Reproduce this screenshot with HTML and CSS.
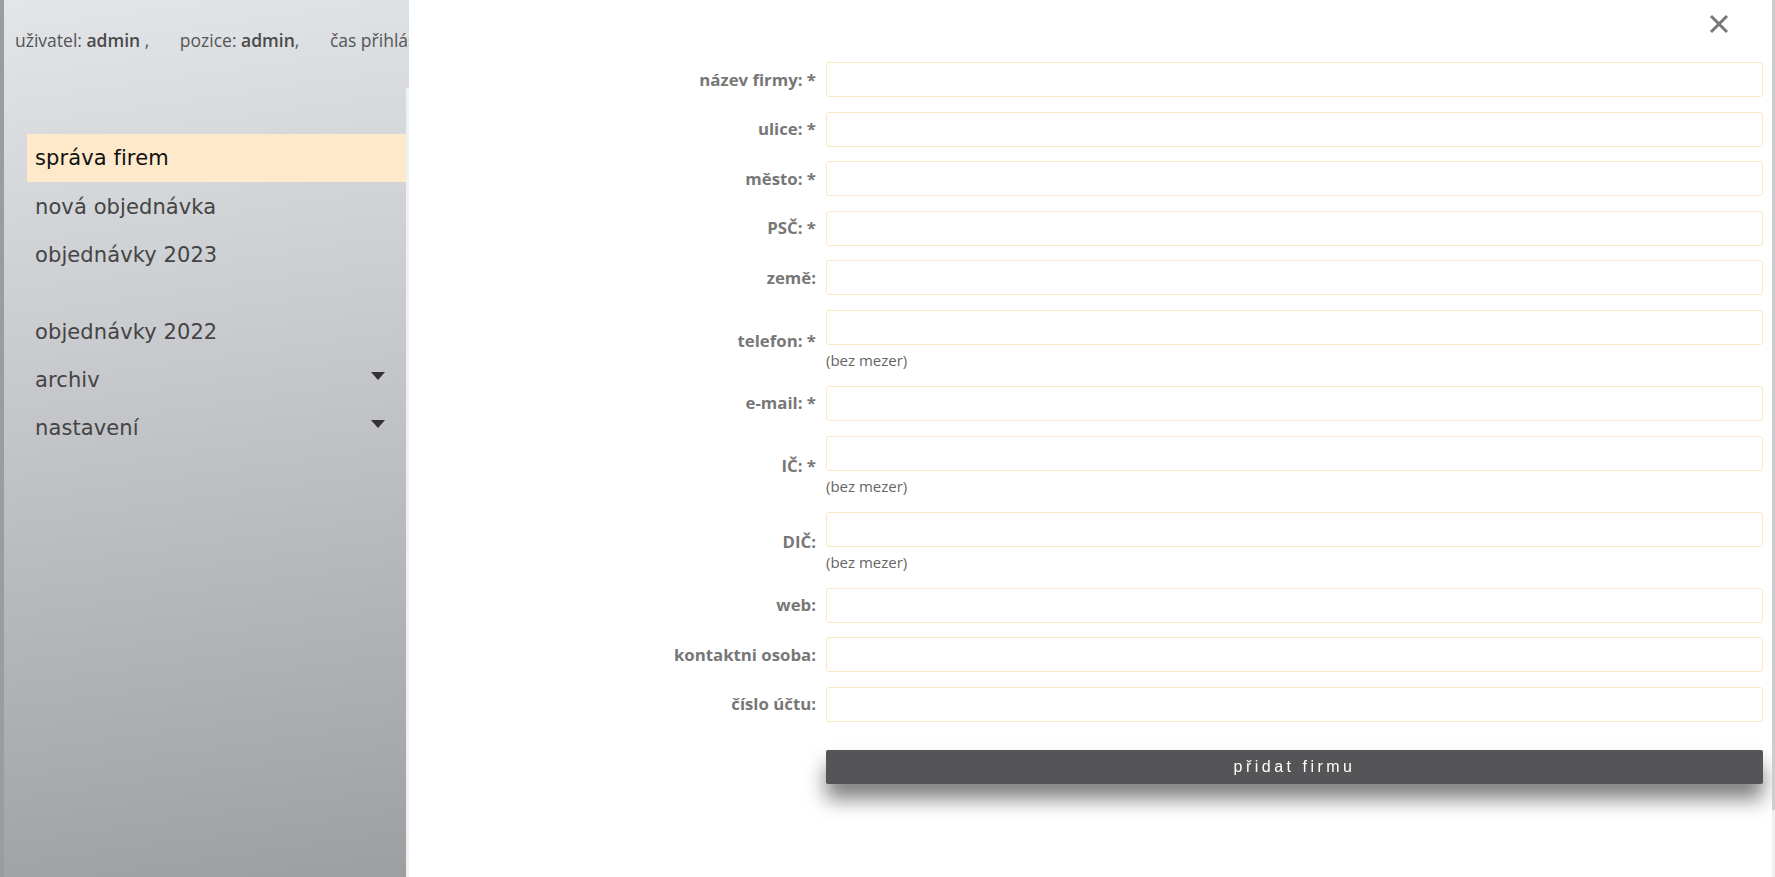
FILE: index.html
```html
<!DOCTYPE html>
<html lang="cs">
<head>
<meta charset="utf-8">
<title>správa firem</title>
<link rel="stylesheet" href="styles.css">
</head>
<body>
<div class="frame">
  <header class="topbar">
    <span class="info">uživatel: <b>admin</b> ,</span>
    <span class="info">pozice: <b>admin</b>,</span>
    <span class="info">čas přihlášení: <b>10:42</b></span>
  </header>
  <div class="body-row">
    <aside class="sidebar">
      <ul class="nav">
        <li class="nav-item active">správa firem</li>
        <li class="nav-item">nová objednávka</li>
        <li class="nav-item">objednávky 2023</li>
        <li class="nav-item spaced">objednávky 2022</li>
        <li class="nav-item has-sub">archiv <span class="caret"></span></li>
        <li class="nav-item has-sub">nastavení <span class="caret"></span></li>
      </ul>
    </aside>
    <main class="main"></main>
  </div>
</div>

<div class="modal">
  <button class="close" type="button" aria-label="zavřít">
    <svg width="20" height="20" viewBox="0 0 20 20"><path d="M2 2 L18 18 M18 2 L2 18" stroke="#777" stroke-width="3" fill="none"/></svg>
  </button>
  <form class="form">
    <label class="lbl">název firmy: *</label>
    <div class="cell"><input class="inp" type="text"></div>

    <label class="lbl">ulice: *</label>
    <div class="cell"><input class="inp" type="text"></div>

    <label class="lbl">město: *</label>
    <div class="cell"><input class="inp" type="text"></div>

    <label class="lbl">PSČ: *</label>
    <div class="cell"><input class="inp" type="text"></div>

    <label class="lbl">země:</label>
    <div class="cell"><input class="inp" type="text"></div>

    <label class="lbl">telefon: *</label>
    <div class="cell"><input class="inp" type="text"><div class="hint">(bez mezer)</div></div>

    <label class="lbl">e-mail: *</label>
    <div class="cell"><input class="inp" type="text"></div>

    <label class="lbl">IČ: *</label>
    <div class="cell"><input class="inp" type="text"><div class="hint">(bez mezer)</div></div>

    <label class="lbl">DIČ:</label>
    <div class="cell"><input class="inp" type="text"><div class="hint">(bez mezer)</div></div>

    <label class="lbl">web:</label>
    <div class="cell"><input class="inp" type="text"></div>

    <label class="lbl">kontaktni osoba:</label>
    <div class="cell"><input class="inp" type="text"></div>

    <label class="lbl">číslo účtu:</label>
    <div class="cell"><input class="inp" type="text"></div>

    <div class="spacer"></div>
    <div class="cell btn-cell"><button class="submit" type="button">přidat firmu</button></div>
  </form>
</div>
<div class="scrollbar"></div>
</body>
</html>
```

FILE: styles.css
```css
html, body {
  margin: 0;
  padding: 0;
  width: 1775px;
  height: 877px;
  overflow: hidden;
}

body {
  font-family: "Open Sans", "DejaVu Sans", sans-serif;
}

.frame {
  width: 1775px;
  height: 877px;
  box-sizing: border-box;
  border-left: 4px solid #9b9c9e;
  background: linear-gradient(172deg, #e3e6e9 0%, #c6c8cb 35%, #a9aaad 70%, #8e8f91 100%);
  display: flex;
  flex-direction: column;
}

.topbar {
  height: 88px;
  box-sizing: border-box;
  padding: 27px 0 0 11px;
  white-space: nowrap;
  font-size: 17.5px;
  color: #555;
  line-height: 26px;
}

.info {
  margin-right: 26px;
}

.info b {
  font-weight: 600;
  color: #4a4a4a;
}

.body-row {
  flex: 1;
  display: flex;
}

.sidebar {
  width: 402px;
  flex: none;
}

.main {
  flex: 1;
  background: #eef1f4;
}

.nav {
  list-style: none;
  margin: 46px 0 0 23px;
  padding: 0;
}

.nav-item {
  height: 48px;
  line-height: 48px;
  padding-left: 8px;
  font-family: "DejaVu Sans", sans-serif;
  font-size: 21px;
  letter-spacing: 0.1px;
  color: #444;
  display: flex;
  align-items: center;
  justify-content: space-between;
  padding-right: 21px;
}

.nav-item:nth-child(2) {
  margin-top: 1px;
}

.nav-item.active {
  background: #feeacb;
  color: #111;
}

.nav-item.spaced {
  margin-top: 29px;
}

.caret {
  width: 0;
  height: 0;
  border-left: 7px solid transparent;
  border-right: 7px solid transparent;
  border-top: 8px solid #333;
  margin-top: -8px;
}

.modal {
  position: fixed;
  left: 409px;
  top: 0;
  width: 1363px;
  height: 877px;
  background: #fff;
}

.close {
  position: absolute;
  left: 1300px;
  top: 14px;
  width: 20px;
  height: 20px;
  padding: 0;
  border: 0;
  background: none;
}

.close svg {
  display: block;
}

.form {
  display: grid;
  grid-template-columns: 407px 1fr;
  column-gap: 10px;
  row-gap: 14.6px;
  padding: 62px 9px 0 0;
}

.lbl {
  align-self: center;
  text-align: right;
  font-weight: 700;
  font-size: 16.8px;
  color: #777;
  line-height: 22px;
}

.cell {
  display: flex;
  flex-direction: column;
}

.inp {
  height: 35px;
  box-sizing: border-box;
  border: 1px solid #fde6c2;
  border-radius: 3px;
  background: #fff;
  margin: 0;
  padding: 0 8px;
  font: inherit;
}

.hint {
  font-size: 15px;
  color: #666;
  line-height: 20px;
  padding: 5px 0 1.4px 0;
}

.btn-cell {
  margin-top: 13.4px;
}

.submit {
  height: 34px;
  border: 0;
  border-radius: 2px;
  background: #555557;
  color: #fff;
  font-family: "Liberation Sans", Arial, sans-serif;
  font-size: 16px;
  letter-spacing: 3.5px;
  box-shadow: 0 15px 20px rgba(0, 0, 0, 0.5);
}

.scrollbar {
  position: fixed;
  right: 0;
  top: 0;
  width: 3px;
  height: 810px;
  background: #cdcdcd;
}
```
